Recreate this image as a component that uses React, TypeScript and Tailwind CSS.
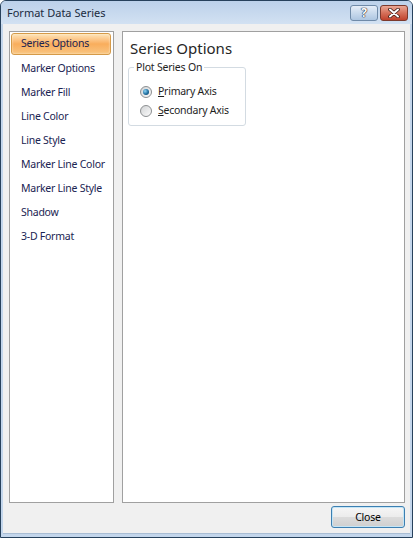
import React from 'react';

const categories = [
  'Series Options',
  'Marker Options',
  'Marker Fill',
  'Line Color',
  'Line Style',
  'Marker Line Color',
  'Marker Line Style',
  'Shadow',
  '3-D Format',
];

function Radio({ checked }: { checked: boolean }) {
  return (
    <span className="w-[12px] h-[12px] rounded-full border border-[#8c8f91] bg-gradient-to-br from-[#d2d4d6] to-[#fbfbfb] flex items-center justify-center shrink-0">
      {checked && (
        <span className="w-[6px] h-[6px] rounded-full bg-[radial-gradient(circle_at_35%_35%,#8fd6f7,#1f6e9f_55%,#0f3d5e)]" />
      )}
    </span>
  );
}

export default function App() {
  return (
    <div className="w-[413px] h-[538px] flex flex-col bg-[#c3d6ec] border border-[#27415c] rounded-t-[6px] px-[2px] pb-[3px] overflow-hidden font-['Noto_Sans',sans-serif]">
      {/* Title bar */}
      <div className="h-[23px] flex items-center justify-between bg-gradient-to-b from-[#bcd1ea] to-[#d2e1f2] -mx-[2px] pl-[6px]">
        <span className="text-[11px] text-[#1b2b40] leading-none whitespace-nowrap">Format Data Series</span>
        <div className="flex items-center gap-[2px] self-start mt-[4px] mr-[4px]">
          <div className="w-[28px] h-[16px] rounded-[3px] border border-[#6f8aa8] bg-gradient-to-b from-[#e6eef8] via-[#c9daed] to-[#aec6e1] flex items-center justify-center">
            <span className="text-[12px] font-bold leading-none text-white [text-shadow:0_0_1px_#223,0_0_1px_#223,0_0_1px_#223]">?</span>
          </div>
          <div className="w-[28px] h-[16px] rounded-[3px] border border-[#7c3a2d] bg-gradient-to-b from-[#eaa795] via-[#d5705a] to-[#c0412c] flex items-center justify-center">
            <svg width="14" height="10" viewBox="0 0 14 10">
              <path d="M3 1.5 L11 8.5 M11 1.5 L3 8.5" stroke="#3a1a14" strokeWidth="3.6" strokeLinecap="round" />
              <path d="M3 1.5 L11 8.5 M11 1.5 L3 8.5" stroke="#ffffff" strokeWidth="2" strokeLinecap="round" />
            </svg>
          </div>
        </div>
      </div>

      {/* Client area */}
      <div className="flex-1 flex flex-col bg-[#f0f0f0] border-b border-[#a9bdd4] pl-[6px] pr-[4px] pt-[7px] pb-[4px]">
        <div className="flex gap-[8px] h-[472px]">
          {/* Category list */}
          <div className="w-[105px] h-full bg-white border border-[#a0a0a0] pt-[1px] pl-[1px] pr-[2px]">
            {categories.map((c, i) =>
              i === 0 ? (
                <div
                  key={c}
                  className="h-[22px] mb-[2px] flex items-center pl-[9px] rounded-[3px] border border-[#d59a48] bg-gradient-to-b from-[#fde4b8] via-[#f9ad5c] to-[#f8c581] shadow-[inset_0_0_2px_#fff3dd] text-[10.5px] tracking-[-0.25px] text-[#1a2452] whitespace-nowrap"
                >
                  {c}
                </div>
              ) : (
                <div key={c} className="h-[24px] flex items-center pl-[10px] text-[10.5px] tracking-[-0.25px] text-[#1a2452] whitespace-nowrap">
                  {c}
                </div>
              )
            )}
          </div>

          {/* Options pane */}
          <div className="w-[283px] h-full bg-white border border-[#a0a0a0] pl-[5px]">
            <div className="text-[15px] text-[#262626] leading-none mt-[9px] ml-[2px] whitespace-nowrap">Series Options</div>
            {/* Group box */}
            <div className="relative mt-[11px] w-[118px] h-[59px] border border-[#d3dbe2] rounded-[3px] pl-[11px] pt-[14px]">
              <span className="absolute -top-[8px] left-[5px] bg-white px-[2px] text-[10.5px] tracking-[-0.2px] text-[#1e1e1e] leading-[14px] whitespace-nowrap">
                Plot Series On
              </span>
              <div className="flex items-center gap-[6px] h-[19px] text-[10.5px] tracking-[-0.25px] text-[#1e1e1e] whitespace-nowrap">
                <Radio checked />
                <span>
                  <span className="underline">P</span>rimary Axis
                </span>
              </div>
              <div className="flex items-center gap-[6px] h-[19px] text-[10.5px] tracking-[-0.25px] text-[#1e1e1e] whitespace-nowrap">
                <Radio checked={false} />
                <span>
                  <span className="underline">S</span>econdary Axis
                </span>
              </div>
            </div>
          </div>
        </div>

        <div className="flex justify-end mt-[3px] pr-[1px]">
          <button className="w-[74px] h-[22px] rounded-[3px] border border-[#3c7fb1] bg-[linear-gradient(#f6f6f6_0%,#ececec_48%,#dcdcdc_50%,#cfcfcf_100%)] shadow-[inset_0_0_0_1px_#c4e5f6] text-[10.5px] tracking-[-0.2px] text-black leading-none">
            Close
          </button>
        </div>
      </div>
    </div>
  );
}
